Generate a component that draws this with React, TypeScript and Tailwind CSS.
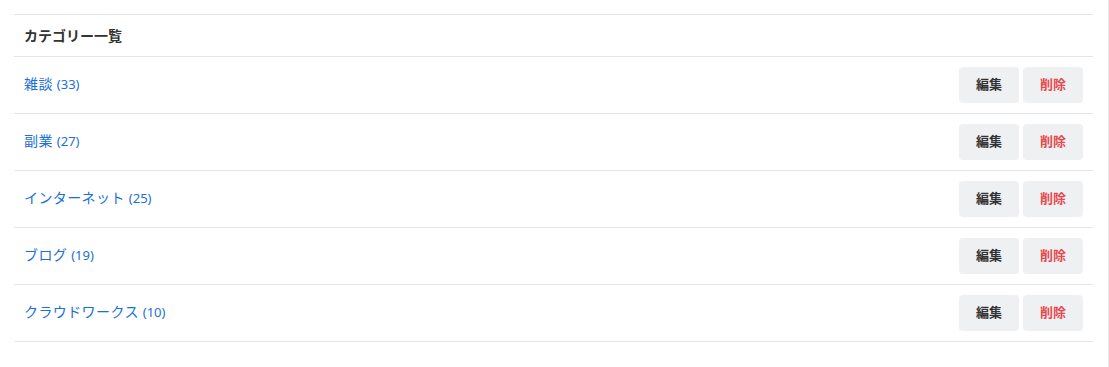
import React from 'react';

type Category = { name: string; count: number };

const categories: Category[] = [
  { name: '雑談', count: 33 },
  { name: '副業', count: 27 },
  { name: 'インターネット', count: 25 },
  { name: 'ブログ', count: 19 },
  { name: 'クラウドワークス', count: 10 },
];

function CategoryRow({ category }: { category: Category }) {
  return (
    <div className="h-[57px] border-b border-[#e3e6e9] flex items-center justify-between pl-[10px] pr-[10px]">
      <a href="#" className="text-[#1a6fd8] text-[14px] leading-none pb-[3px]">
        <span className="tracking-[0.4px]">{category.name}</span>
        <span className="text-[13px] ml-[4px]">({category.count})</span>
      </a>
      <div className="flex gap-[4px]">
        <button className="w-[60px] h-[36px] rounded-[4px] bg-[#eff0f2] text-[13px] font-bold text-[#333]">
          編集
        </button>
        <button className="w-[60px] h-[36px] rounded-[4px] bg-[#eff0f2] text-[13px] font-bold text-[#e5484d]">
          削除
        </button>
      </div>
    </div>
  );
}

export default function App() {
  return (
    <div
      className="min-h-[367px] w-full bg-white border-r border-[#ebebeb] pt-[14px] pl-[14px] pr-[15px]"
      style={{ fontFamily: '"Noto Sans", "Noto Sans CJK JP", sans-serif' }}
    >
      <div className="border-t border-[#e3e6e9]">
        <div className="h-[42px] border-b border-[#e3e6e9] flex items-center px-[10px]">
          <h2 className="text-[14px] font-bold text-[#333] leading-none">カテゴリー一覧</h2>
        </div>
        {categories.map(c => (
          <CategoryRow key={c.name} category={c} />
        ))}
      </div>
    </div>
  );
}
